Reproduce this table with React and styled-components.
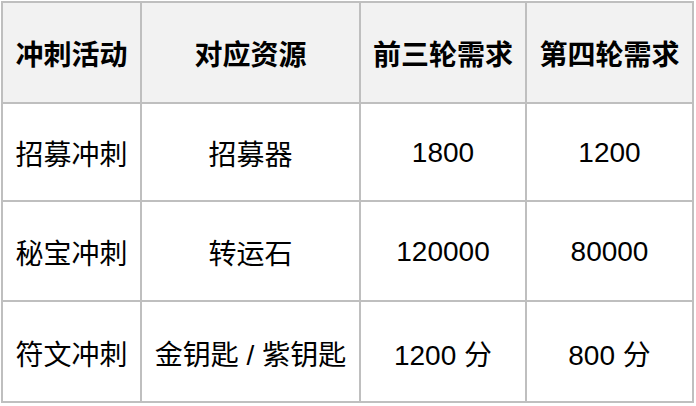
import styled, { createGlobalStyle } from "styled-components";

const GlobalStyle = createGlobalStyle`
  html, body {
    margin: 0;
    padding: 0;
    background: #ffffff;
  }
  body {
    font-family: "Liberation Sans", "Noto Sans CJK SC", sans-serif;
    color: #000000;
  }
`;

const Page = styled.div`
  padding: 1px 0 0 1px;
`;

const Grid = styled.div`
  display: grid;
  grid-template-columns: 137px 217px 164px 165px;
  grid-template-rows: 99px 96px 98px 99px;
  gap: 2px;
  padding: 2px;
  width: max-content;
  background: #bfbfbf;
`;

const Cell = styled.div`
  display: flex;
  align-items: center;
  justify-content: center;
  white-space: nowrap;
  font-size: 28px;
  padding-top: ${(p) => (p.$head ? "0" : "2px")};
  font-weight: ${(p) => (p.$head ? 700 : 400)};
  background: ${(p) => (p.$head ? "#f2f2f2" : "#ffffff")};
`;

const headers = ["冲刺活动", "对应资源", "前三轮需求", "第四轮需求"];

const rows = [
  ["招募冲刺", "招募器", "1800", "1200"],
  ["秘宝冲刺", "转运石", "120000", "80000"],
  ["符文冲刺", "金钥匙 / 紫钥匙", "1200 分", "800 分"],
];

export default function App() {
  return (
    <>
      <GlobalStyle />
      <Page>
        <Grid>
          {headers.map((h) => (
            <Cell key={h} $head>
              {h}
            </Cell>
          ))}
          {rows.map((r) =>
            r.map((c, i) => <Cell key={r[0] + i}>{c}</Cell>)
          )}
        </Grid>
      </Page>
    </>
  );
}
